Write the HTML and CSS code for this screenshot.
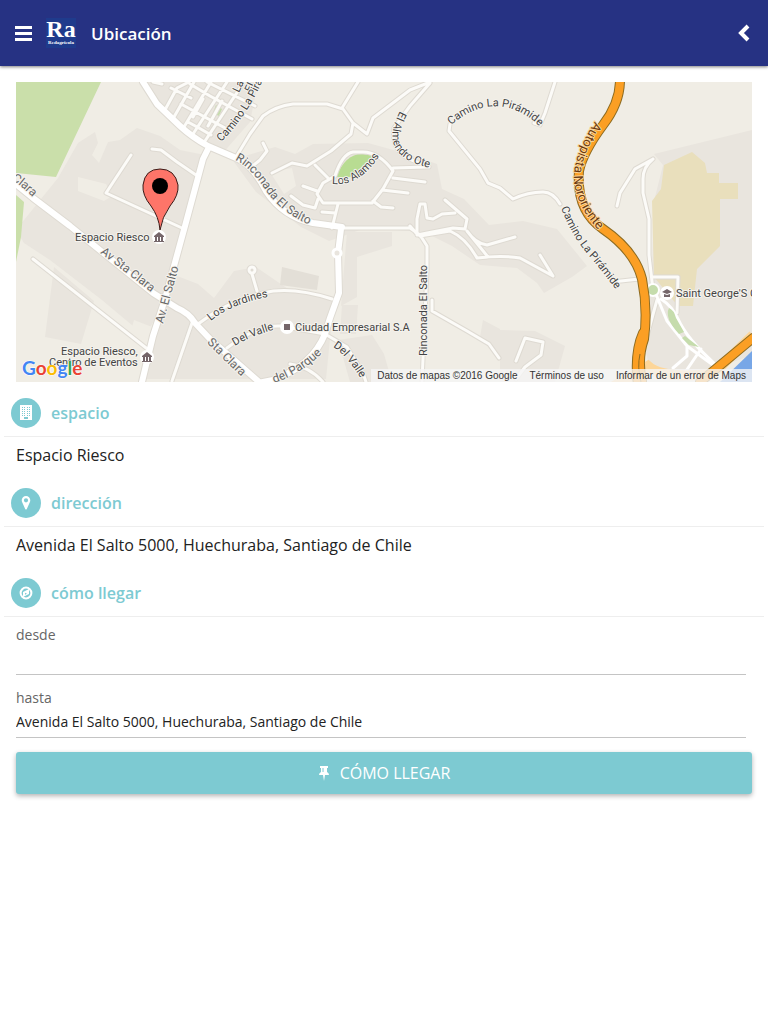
FILE: index.html
```html
<!DOCTYPE html>
<html lang="es">
<head>
    <meta charset="utf-8" />
    <meta name="viewport" content="width=device-width, initial-scale=1">
    <title>Ubicación</title>
    <link rel="stylesheet" href="styles.css">
</head>
<body>
    <header class="bar">
        <button class="bar-button" type="button" aria-label="Menú">
            <svg width="18" height="18" viewBox="0 0 18 18"><path d="M0 2h17v3H0zM0 8h17v3H0zM0 14h17v3H0z" fill="#fff"/></svg>
        </button>
        <div class="logo">
            <span class="logo-big">Ra</span>
            <span class="logo-small">Redagrícola</span>
        </div>
        <h1 class="title">Ubicación</h1>
        <button class="bar-button" type="button" aria-label="Volver">
            <svg width="16" height="20" viewBox="0 0 16 20"><path d="M11 3L4 10l7 7" fill="none" stroke="#fff" stroke-width="4"/></svg>
        </button>
    </header>

    <main class="content">
        <div class="map">
            <svg class="map-canvas" viewBox="16 82 736 300" preserveAspectRatio="xMidYMid slice">
                <defs>
                    <path id="t-clara" d="M2 174Q20 183 37 202"/>
                    <path id="t-avclara" d="M100 253Q128 274 156 296"/>
                    <path id="t-salto" d="M163 324L180 262"/>
                    <path id="t-staclara" d="M207 343Q222 358 250 385"/>
                    <path id="t-rinco" d="M235 160Q250 167 264 188Q284 218 322 229"/>
                    <path id="t-camino" d="M221 142Q245 119 262 82L275 54"/>
                    <path id="t-jardines" d="M211 321Q230 304 272 296"/>
                    <path id="t-valle" d="M235 346Q252 335 280 328"/>
                    <path id="t-valle2" d="M333 347Q346 354 363 382"/>
                    <path id="t-parque" d="M274 383Q303 374 328 347"/>
                    <path id="t-alamos" d="M332 184Q361 187 381 153"/>
                    <path id="t-almendro" d="M400 111C386 138 388 160 436 169"/>
                    <path id="t-piramide" d="M451 125Q494 89 535 122l12 12"/>
                    <path id="t-piramide2" d="M561 208Q573 239 592 259L618 292"/>
                    <path id="t-autopista" d="M595 121Q569 162 575 188Q580 212 604 236l8 8"/>

                    <g id="streets">
                        <path d="M131 155L106 193 182 228M152 149l9 1 16 12 19 13M33 259L150 351M192 323L172 381"/>
                        <path d="M153 82l9 2M166 108l11-20 12-6M174 117l20-35M184 127l27-45M193 134l34-52M205 141l37-56M171 88l20 10M190 84l20 12 42 23M181 104l20 11 26 14M188 122l11 6 12 7M203 99l-10 18M222 101l-14 25M207 82l48 24"/>
                        <path d="M236 157l14-23 13-18q13-10 30-12h34l16 5 10 14-2 11-20 17-24 15-15-3-20 10M358 82L342 108M353 123l14 11 6-16 37-28 20-8M430 83l-20 23-16 22q-3 20 13 30l22 9"/>
                        <path d="M263 143l4 8-7 9-10 8M335 176q7-22 18-24h10q16 0 30 19l-10 18-11 14h-49l-6-9 6-11zM393 168l34-1M393 178l32 4M382 190l26 3M373 201l8 6 12 1M315 165l13 13M303 186l14 5M291 196l12 9 12 3 3-9M338 204l-6 24M322 212l13 1"/>
                        <path d="M343 228h67l10 7 7 11v24L422 381M432 300v11l35 20 22 13 10 14M417 234l-7-8M417 232v-13l3-15h5l2 14 6 1 9-5 13-1M445 200l22 19-2 10-12-1-36 7M420 236l30-5q16 7 27 27l11-1-21-26q8 12 20 14l28-8M477 258q25-3 43 0l33 18-13-21M516 361l9-23 18 4-2 13-16 12-9 12"/>
                        <path d="M555 82l-10 31-5 12-6-2M450 124l-1 7 31 38 8 14 12 5 13 11q15-7 30-7 10 0 17 12M612 282l27-3M617 206l3-13 15-24 18-10M653 159q-10 8-10 20v14l6 26v36l4 35"/>
                        <path d="M198 324q28-22 65-31 28-7 69 6M252 274l5 17M227 348q30-23 53-22l45 8 22 13 16 26 4 12M290 364q20 3 33 18M652 277h26l-1 36M657 300l-10 36"/>
                        <circle cx="252" cy="270" r="3"/>
                    </g>
                    <path id="roads" d="M143 82l14 22 23 22q12 11 28 20l28 12q16 6 30 33 17 26 47 32l29 4M209 147l-6 12-18 67-20 73-12 37-11 46M16 184l17 14 37 28 83 67 24 15q12 5 18 15l15 16 48 42M341 229l-3 24 1 40-9 25-5 16q-13 32-52 46l-15 3"/>
                    <g id="motorway">
                        <path d="M620 80q0 23-17 45-20 27-24 46-3 40 24 58 32 22 39 50 6 30 2 60-7 20-2 42"/>
                        <path d="M643 333q-9 20-5 52M700 382l53-44"/>
                    </g>
                </defs>
                <rect x="16" y="82" width="736" height="300" fill="#f0ede5"/>

                <!-- built up areas -->
                <g fill="#e9e5de">
                    <path d="M16 230L58 178 78 143 95 132 98 143 92 155 99 163 108 142 120 140 137 128 160 136 180 150 205 155 166 300 145 336 102 300 50 260 24 243z"/>
                    <path d="M145 82h113l-8 40-28 32-18-7-28-22-20-24z"/>
                    <path d="M54 267l40 34-13 43-36-7zM172 274l26 10 16 14 20-27 22-4 35 24 43 8-8 80H143l22-75z"/>
                    <path d="M275 147l20 7 18-10 55-1 40 11 29 10 5 25 22 10 25 26 34-4 34 8 30 37-15 11-28 16-7-10-20-15-37-3-28-19-28-14-58-4-37 13-28-14-45-35-22-30 14-7z"/>
                    <path d="M347 232h45v14l-35 11v40l-16 9zM342 305h16l-2 29h-16zM338 340l34-5 12 19 8 28h-42z"/>
                    <path d="M483 320l17 9v28l-20-20zM500 330l35 1 30 15-10 36h-55z"/>
                    <path d="M654 154l98-24v225l-60 22h-40l-10-40 10-60 2-76 9-36z"/>
                </g>
                <path d="M78 177l28 7 6 12-8 5-26-10zM134 320l18 7-3 12-18-8zM270 172l22-4 4 18-12 8z" fill="#f0ede5"/>
                <path d="M282 267l37 9-2 14-37-5z" fill="#e3dfd7"/>
                <path d="M652 201l9-12 3-24 28-13 13 11 2 10h12v10h19v16h-18v47l-23 23-4 37h-15l-24-29z" fill="#e9dfbc"/>
                <path d="M16 82h85L56 177 16 173zM16 195l8 7-3 35-5 25z" fill="#cadfaa"/>
                <path d="M336 177q10-24 27-23l10 2q-5 24-37 21z" fill="#b8dc92"/>
                <path d="M216 105l6 4-3 7-6-3z" fill="#c5dcac"/>
                <path d="M720 382l32-31v31z" fill="#78a7e7"/>

                <!-- streets: grey casing first, white on top -->
                <use href="#streets" class="line street-case"/>
                <use href="#roads" class="line road-case"/>
                <use href="#streets" class="line street"/>
                <use href="#roads" class="line road"/>
                <circle cx="337" cy="253" r="4" fill="#e9e5de" stroke="#fff" stroke-width="3"/>
                <path d="M655 292l12 29 20 25 26 19M661 299q11 7 17 20 9 20 36 44M687 346v10l-14 12M701 349l-15 22" class="line ramp"/>
                <circle cx="653" cy="290" r="6" fill="#c5dcac" stroke="#fff" stroke-width="2"/>
                <path d="M669 308q5 2 7 10l8 14-5 2q-15-16-10-26zM685 336l14 11-10-2-7-7z" fill="#c5dcac"/>

                <!-- motorway -->
                <path d="M610 388q20-10 38-22 14 13 65 8l40-39" fill="none" stroke="#fdd699" stroke-width="10"/>
                <use href="#motorway" class="line motor-case"/>
                <use href="#motorway" class="line motor"/>
                <path d="M641 382q-4-15-1-28" fill="none" stroke="#8d6c22"/>

                <!-- places -->
                <g fill="#fff"><circle cx="159" cy="237" r="7"/><circle cx="147" cy="357" r="7"/><circle cx="287" cy="327" r="7"/><circle cx="667" cy="293" r="7"/></g>
                <g fill="#75666a">
                    <path id="museum" d="M154 242v-1h1v-4h-1v-1l5-4 5 4v1h-1v4h1v1zM157 237v4h1v-4zM160 237v4h1v-4z" fill-rule="evenodd"/>
                    <use href="#museum" x="-12" y="120"/>
                    <path d="M284 324h6v6h-6z"/>
                    <path d="M662 292l5-3 5 3-5 2zM664 294l3 1 3-1v3h-6z"/>
                </g>

                <g class="label">
                    <text x="75" y="241">Espacio Riesco</text>
                    <text x="61" y="355">Espacio Riesco,</text>
                    <text x="49" y="366">Centro de Eventos</text>
                    <text x="295" y="331">Ciudad Empresarial S.A</text>
                    <text x="676" y="297">Saint George'S Co</text>
                    <text transform="translate(427 356) rotate(-90)">Rinconada El Salto</text>
                    <text transform="translate(239 93) rotate(-65)">Las</text>
                    <text transform="translate(251 93) rotate(-65)">El Si</text>
                    <text><textPath href="#t-camino">Camino La Pirámide</textPath></text>
                    <text><textPath href="#t-jardines">Los Jardines</textPath></text>
                    <text><textPath href="#t-valle">Del Valle</textPath></text>
                    <text><textPath href="#t-valle2">Del Valle</textPath></text>
                    <text><textPath href="#t-alamos">Los Alamos</textPath></text>
                    <text><textPath href="#t-almendro">El Almendro Ote</textPath></text>
                    <text><textPath href="#t-piramide">Camino La Pirámide</textPath></text>
                    <text><textPath href="#t-piramide2">Camino La Pirámide</textPath></text>
                </g>
                <g class="label avenue">
                    <text><textPath href="#t-clara" startOffset="11">Clara</textPath></text>
                    <text><textPath href="#t-avclara">Av Sta Clara</textPath></text>
                    <text><textPath href="#t-salto">Av. El Salto</textPath></text>
                    <text><textPath href="#t-staclara">Sta Clara</textPath></text>
                    <text><textPath href="#t-rinco">Rinconada El Salto</textPath></text>
                    <text><textPath href="#t-parque">del Parque</textPath></text>
                </g>
                <text class="label highway"><textPath href="#t-autopista">Autopista Nororiente</textPath></text>

                <!-- marker -->
                <path d="M160 230q-1-13-9-24-9-11-8-21 2-16 17-16t18 16q1 10-8 21-8 11-10 24z" fill="#fe7569" stroke="#3a1a17"/>
                <circle cx="160" cy="186" r="8" fill="#000"/>

                <text class="google" x="22" y="375"><tspan fill="#4285f4">G</tspan><tspan fill="#ea4335">o</tspan><tspan fill="#fbbc05">o</tspan><tspan fill="#4285f4">g</tspan><tspan fill="#34a853">l</tspan><tspan fill="#ea4335">e</tspan></text>
            </svg>
            <div class="map-credits">
                <span>Datos de mapas ©2016 Google</span>
                <a href="#">Términos de uso</a>
                <a href="#">Informar de un error de Maps</a>
            </div>
        </div>

        <section class="item">
            <h2 class="item-title">
                <span class="badge">
                    <svg width="14" height="16" viewBox="0 0 14 16">
                        <path d="M1 0h12v15H1z" fill="#fff"/>
                        <path d="M3.500 2v10M5.500 2v10M8.500 2v10M10.500 2v10" stroke="#7dcad2" stroke-dasharray="1 1"/>
                        <path d="M5 12h4v2H5z" fill="#7dcad2"/>
                    </svg>
                </span>
                espacio
            </h2>
            <p class="item-text">Espacio Riesco</p>
        </section>

        <section class="item">
            <h2 class="item-title">
                <span class="badge">
                    <svg width="10" height="14" viewBox="0 0 10 14"><path d="M5 0a4.300 4.300 0 0 1 4.300 4.300c0 1-.3 1.700-.6 2.300L5.800 13q-.8 1-1.600 0L1.300 6.600C1 6 .7 5.300.7 4.300A4.300 4.300 0 0 1 5 0zm0 2.200a2.100 2.100 0 1 0 0 4.200 2.100 2.100 0 0 0 0-4.200z" fill="#fff" fill-rule="evenodd"/></svg>
                </span>
                dirección
            </h2>
            <p class="item-text">Avenida El Salto 5000, Huechuraba, Santiago de Chile</p>
        </section>

        <section class="item">
            <h2 class="item-title">
                <span class="badge">
                    <svg width="14" height="14" viewBox="0 0 14 14">
                        <circle cx="7" cy="7" r="5.400" fill="none" stroke="#fff" stroke-width="2"/>
                        <path d="M10 3v5l-6 3V6zM6 6.700v2L8 7.700z" fill="#fff" fill-rule="evenodd"/>
                    </svg>
                </span>
                cómo llegar
            </h2>
            <form class="route">
                <div class="field">
                    <label for="desde">desde</label>
                    <input type="text" id="desde">
                </div>
                <div class="field">
                    <label for="hasta">hasta</label>
                    <input type="text" id="hasta" value="Avenida El Salto 5000, Huechuraba, Santiago de Chile">
                </div>
                <button class="go" type="button">
                    <svg width="12" height="15" viewBox="0 0 12 15"><path d="M2 0h8v2H9v4q2 1 2 3H7l-1 6-1-6H1q0-2 2-3V2H2z" fill="#fff"/><path d="M5 2v4" stroke="#7dcad2"/></svg>
                    CÓMO LLEGAR
                </button>
            </form>
        </section>
    </main>
</body>
</html>
```

FILE: styles.css
```css
* {
    box-sizing:border-box;
}
body {
    margin:0;
    background-color:#fff;
    color:#222;
    font-family:"Open Sans",sans-serif;
    font-size:16px;
}
button {
    font-family:inherit;
    border:0;
    padding:0;
    cursor:pointer;
}
svg {
    display:block;
}
.bar {
    display:flex;
    align-items:center;
    height:66px;
    padding:0 15px;
    background-color:#263283;
    box-shadow:0 1px 3px rgba(0,0,0,0.5);
}
.bar-button {
    background:none;
}
.logo {
    display:flex;
    flex-direction:column;
    align-items:center;
    width:30px;
    height:30px;
    margin:0 15px 0 13px;
    background-color:#1f3b8c;
    color:#fff;
    font-family:"Liberation Serif",serif;
    font-weight:bold;
}
.logo-big {
    font-size:24px;
    line-height:22px;
}
.logo-small {
    font-size:5px;
    line-height:6px;
}
.title {
    flex:1;
    margin:0;
    color:#fff;
    font-size:17px;
    font-weight:600;
}
.content {
    padding:16px 4px;
}
.map {
    position:relative;
    height:300px;
    margin:0 12px 12px;
    overflow:hidden;
}
.map-canvas {
    width:100%;
    height:100%;
}
.line {
    fill:none;
    stroke:#fff;
    stroke-linejoin:round;
    stroke-linecap:round;
}
.street-case {
    stroke:#dedad2;
    stroke-width:5px;
}
.road-case {
    stroke:#dedad2;
    stroke-width:8px;
}
.street {
    stroke:#fcfbf8;
    stroke-width:3px;
}
.road {
    stroke-width:6px;
}
.ramp {
    stroke-width:3px;
}
.motor-case {
    stroke:#8d6c22;
    stroke-width:10px;
}
.motor {
    stroke:#fb9f24;
    stroke-width:8px;
}
.label {
    font-family:Roboto,sans-serif;
    font-size:11px;
    fill:#444;
    stroke:#f5f3ee;
    stroke-width:2px;
    stroke-linejoin:round;
    paint-order:stroke;
}
.avenue {
    font-size:12px;
    fill:#666;
}
.highway {
    font-size:13px;
    fill:#6b3a10;
    stroke:#fdd699;
}
.google {
    font-family:Lato,sans-serif;
    font-size:19px;
    font-weight:bold;
    stroke:#fff;
    stroke-width:1px;
    paint-order:stroke;
}
.map-credits {
    position:absolute;
    right:0;
    bottom:0;
    display:flex;
    gap:12px;
    padding:0 6px;
    background-color:rgba(245,245,245,0.8);
    color:#333;
    font-family:"Liberation Sans",sans-serif;
    font-size:10px;
    line-height:13px;
}
.map-credits a {
    color:#333;
    text-decoration:none;
}
.item-title {
    display:flex;
    align-items:center;
    gap:10px;
    height:43px;
    margin:0;
    padding:0 7px 5px;
    border-bottom:1px solid #eee;
    color:#7dcad2;
    font-size:16px;
    font-weight:600;
}
.badge {
    display:flex;
    align-items:center;
    justify-content:center;
    width:30px;
    height:30px;
    border-radius:50%;
    background-color:#7dcad2;
}
.item-text {
    height:47px;
    margin:0;
    padding:6px 12px;
    line-height:24px;
}
.route {
    padding:6px 12px;
}
.field {
    height:63px;
    margin-right:6px;
}
.field label {
    display:block;
    color:#666;
    font-size:14px;
    line-height:24px;
}
.field input {
    width:100%;
    height:28px;
    padding:0 0 4px;
    border:0;
    border-bottom:1px solid #c4c4c4;
    background:none;
    color:#222;
    font-family:inherit;
    font-size:14px;
}
.go {
    display:flex;
    align-items:center;
    justify-content:center;
    gap:10px;
    width:100%;
    height:42px;
    margin-top:3px;
    border-radius:3px;
    background-color:#7dcad2;
    box-shadow:0 2px 5px rgba(0,0,0,0.3);
    color:#fff;
    font-size:16px;
}
```
